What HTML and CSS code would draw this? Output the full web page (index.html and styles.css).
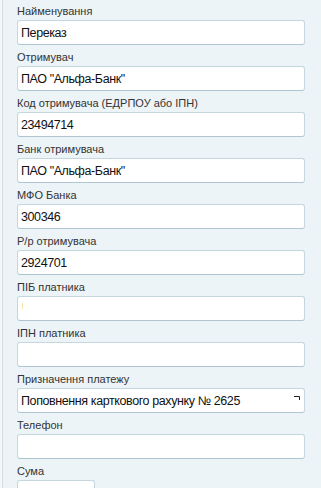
FILE: index.html
```html
<!DOCTYPE html>
<html lang="uk">
<head>
    <meta charset="UTF-8">
    <meta name="viewport" content="width=device-width, initial-scale=1.0">
    <title>Платіж</title>
    <link rel="stylesheet" href="styles.css">
</head>
<body>
    <form class="payment-form">
        <div class="field">
            <label class="field-label">Найменування</label>
            <input class="field-input" type="text" value="Переказ">
        </div>
        <div class="field">
            <label class="field-label">Отримувач</label>
            <input class="field-input" type="text" value="ПАО &quot;Альфа-Банк&quot;">
        </div>
        <div class="field">
            <label class="field-label">Код отримувача (ЕДРПОУ або ІПН)</label>
            <input class="field-input" type="text" value="23494714">
        </div>
        <div class="field">
            <label class="field-label">Банк отримувача</label>
            <input class="field-input" type="text" value="ПАО &quot;Альфа-Банк&quot;">
        </div>
        <div class="field">
            <label class="field-label">МФО Банка</label>
            <input class="field-input" type="text" value="300346">
        </div>
        <div class="field">
            <label class="field-label">Р/р отримувача</label>
            <input class="field-input" type="text" value="2924701">
        </div>
        <div class="field">
            <label class="field-label">ПІБ платника</label>
            <div class="input-wrap">
                <input class="field-input" type="text" value="">
                <span class="caret-mark"></span>
            </div>
        </div>
        <div class="field">
            <label class="field-label">ІПН платника</label>
            <input class="field-input" type="text" value="">
        </div>
        <div class="field">
            <label class="field-label">Призначення платежу</label>
            <div class="input-wrap">
                <input class="field-input" type="text" value="Поповнення карткового рахунку № 2625">
                <span class="masked-dot"></span>
                <svg class="corner-mark" width="6" height="5" viewBox="0 0 6 5">
                    <path d="M0 0.5 H5.5 V4" fill="none" stroke="#222" stroke-width="1"/>
                </svg>
            </div>
        </div>
        <div class="field">
            <label class="field-label">Телефон</label>
            <input class="field-input" type="text" value="">
        </div>
        <div class="field">
            <label class="field-label">Сума</label>
            <input class="field-input short" type="text" value="">
        </div>
    </form>
</body>
</html>
```

FILE: styles.css
```css
* {
    margin: 0;
    padding: 0;
    box-sizing: border-box;
}

body {
    font-family: 'Liberation Sans', Arial, sans-serif;
    background: #f4f8fa;
    color: #333;
    overflow: hidden;
}

.payment-form {
    margin-left: 2px;
    border-left: 1px solid #d3dde2;
    background: #edf4f8;
    padding: 4px 16px 0 14px;
    min-height: 488px;
}

.field {
    margin-bottom: 5px;
}

.field-label {
    display: block;
    font-size: 11px;
    line-height: 14px;
    color: #333;
    margin-bottom: 2px;
}

.input-wrap {
    position: relative;
}

.field-input {
    display: block;
    width: 100%;
    height: 25px;
    padding: 0 3px;
    border: 1px solid #c4d6de;
    border-bottom-color: #afc6d0;
    border-radius: 3px;
    background: #fff;
    font-family: 'Liberation Sans', Arial, sans-serif;
    font-size: 12.5px;
    letter-spacing: -0.4px;
    color: #111;
    outline: none;
}

.field-input.short {
    width: 78px;
}

.caret-mark {
    position: absolute;
    left: 5px;
    top: 7px;
    width: 1px;
    height: 6px;
    background: #f3e6a8;
}

.masked-dot {
    position: absolute;
    left: 219px;
    top: 10px;
    width: 1px;
    height: 2px;
    background: #8fb0e0;
}

.corner-mark {
    position: absolute;
    right: 5px;
    top: 8px;
}
```
